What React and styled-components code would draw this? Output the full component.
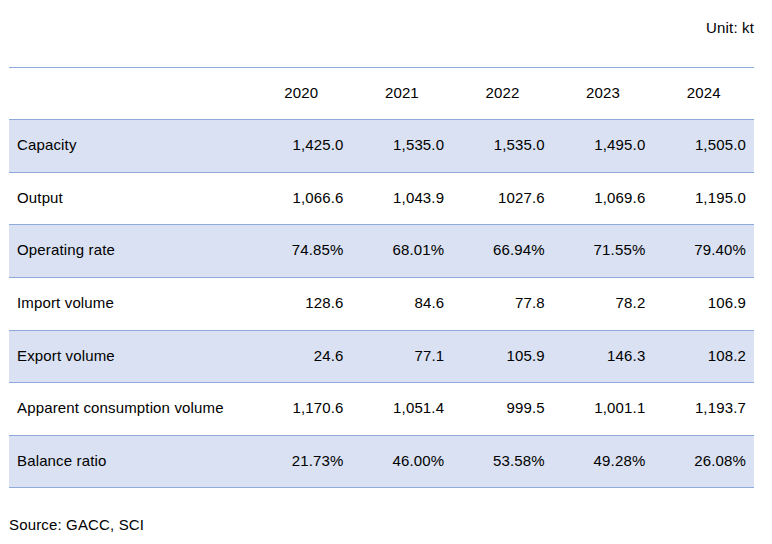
import React from "react";
import styled, { createGlobalStyle } from "styled-components";

const Global = createGlobalStyle`
  html, body { margin: 0; padding: 0; background: #fff; }
  body { font-family: "Liberation Sans", Arial, sans-serif; color: #000; }
`;

const Page = styled.div`
  width: 772px;
  height: 544px;
  box-sizing: border-box;
  padding: 19px 18px 0 9px;
  display: flex;
  flex-direction: column;
  letter-spacing: 0.15px;
`;

const Unit = styled.div`
  text-align: right;
  font-size: 15px;
  line-height: 17px;
  height: 48px;
`;

const Table = styled.div`
  border-top: 1px solid #8eaadb;
  display: flex;
  flex-direction: column;
`;

const Row = styled.div`
  display: grid;
  grid-template-columns: 242px repeat(5, 1fr);
  align-items: center;
  height: ${(p) => p.$h}px;
  box-sizing: border-box;
  padding-bottom: 3px;
  border-bottom: 1px solid #8eaadb;
  background: ${(p) => (p.$shade ? "#d9e1f2" : "#fff")};
  font-size: 15px;
`;

const Label = styled.div`
  padding-left: 8px;
`;

const Cell = styled.div`
  text-align: ${(p) => (p.$head ? "center" : "right")};
  padding-right: ${(p) => (p.$head ? "0" : "8px")};
`;

const Footer = styled.div`
  margin-top: 28px;
  font-size: 15px;
  line-height: 17px;
`;

const years = ["2020", "2021", "2022", "2023", "2024"];
const rows = [
  ["Capacity", "1,425.0", "1,535.0", "1,535.0", "1,495.0", "1,505.0"],
  ["Output", "1,066.6", "1,043.9", "1027.6", "1,069.6", "1,195.0"],
  ["Operating rate", "74.85%", "68.01%", "66.94%", "71.55%", "79.40%"],
  ["Import volume", "128.6", "84.6", "77.8", "78.2", "106.9"],
  ["Export volume", "24.6", "77.1", "105.9", "146.3", "108.2"],
  ["Apparent consumption volume", "1,170.6", "1,051.4", "999.5", "1,001.1", "1,193.7"],
  ["Balance ratio", "21.73%", "46.00%", "53.58%", "49.28%", "26.08%"],
];
const heights = [53, 52, 53, 53, 52, 53, 52];

export default function App() {
  return (
    <Page>
      <Global />
      <Unit>Unit: kt</Unit>
      <Table>
        <Row $h={52}>
          <Label />
          {years.map((y) => (
            <Cell $head key={y}>{y}</Cell>
          ))}
        </Row>
        {rows.map((r, i) => (
          <Row key={r[0]} $shade={i % 2 === 0} $h={heights[i]}>
            <Label>{r[0]}</Label>
            {r.slice(1).map((v, j) => (
              <Cell key={j}>{v}</Cell>
            ))}
          </Row>
        ))}
      </Table>
      <Footer>Source: GACC, SCI</Footer>
    </Page>
  );
}
